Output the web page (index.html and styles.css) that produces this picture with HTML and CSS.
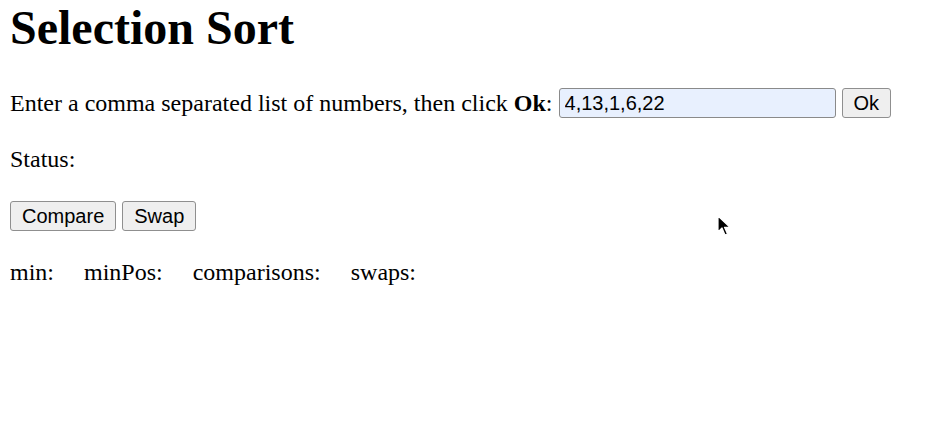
FILE: index.html
```html
<!DOCTYPE html>
<html lang="en">
<head>
    <meta charset="UTF-8">
    <title>Selection Sort</title>
    <link rel="stylesheet" href="styles.css">
</head>
<body>
    <h1>Selection Sort</h1>

    <div class="input-row">
        <span>Enter a comma separated list of numbers, then click <strong>Ok</strong>:</span>
        <input type="text" id="numbers" class="numbers" value="4,13,1,6,22">
        <button type="button" class="ok-btn">Ok</button>
    </div>

    <p class="status">Status: <span id="status"></span></p>

    <div class="actions">
        <button type="button">Compare</button>
        <button type="button">Swap</button>
    </div>

    <p class="counters">
        <span class="counter">min: <span id="min"></span></span>
        <span class="counter">minPos: <span id="minPos"></span></span>
        <span class="counter">comparisons: <span id="comparisons"></span></span>
        <span class="counter">swaps: <span id="swaps"></span></span>
    </p>

    <svg class="cursor" width="14" height="22" viewBox="0 0 14 22">
        <path d="M1 1 L1 17 L5 13 L8 20 L10.5 19 L7.5 12.3 L13 12.3 Z" fill="#000" stroke="#fff" stroke-width="1.2" stroke-linejoin="round"/>
    </svg>
</body>
</html>
```

FILE: styles.css
```css
body {
    font-family: "Liberation Serif", "Times New Roman", serif;
    font-size: 24px;
    line-height: 28px;
    color: #000;
    background: #fff;
    margin: 0 10px;
    position: relative;
    height: 431px;
}
h1 {
    font-size: 48px;
    line-height: 56px;
    margin: 0 0 32px;
}
.input-row {
    display: flex;
    align-items: center;
    height: 30px;
}
input, button {
    font-family: "Liberation Sans", Arial, sans-serif;
    font-size: 20px;
    box-sizing: border-box;
    height: 30px;
    margin: 0;
}
.numbers {
    width: 277px;
    margin-left: 6px;
    padding: 0 5px;
    border: 1px solid #8a8a8a;
    border-radius: 3px;
    background-color: #e8f0fe;
    color: #000;
}
button {
    background-color: #efefef;
    color: #000;
    border: 1px solid #8f8f8f;
    border-radius: 3px;
    padding: 0 11px;
}
.ok-btn {
    margin-left: 6px;
}
.status {
    margin: 27px 0 0;
}
.actions {
    display: flex;
    gap: 6px;
    margin-top: 28px;
}
.counters {
    margin: 27px 0 0;
}
.counter {
    margin-right: 24px;
}
.cursor {
    position: absolute;
    left: 707px;
    top: 215px;
}
```
